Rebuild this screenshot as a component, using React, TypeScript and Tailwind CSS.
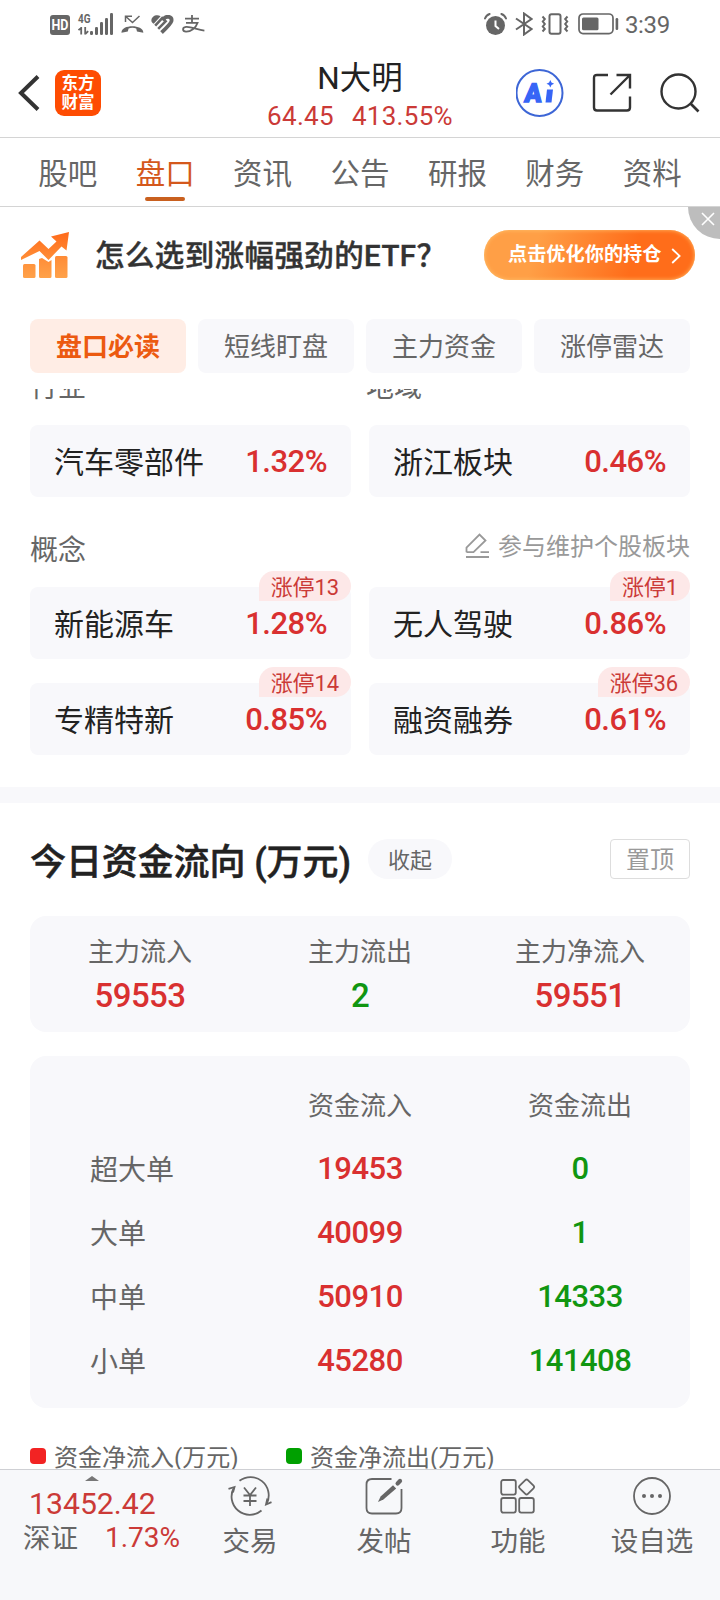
import React, { useState } from 'react';

type Sector = { name: string; change: string; limitUp?: string };

const TABS = ['股吧', '盘口', '资讯', '公告', '研报', '财务', '资料'];
const CHIPS = ['盘口必读', '短线盯盘', '主力资金', '涨停雷达'];

const INDUSTRY: Sector[] = [
  { name: '汽车零部件', change: '1.32%' },
  { name: '浙江板块', change: '0.46%' },
];

const CONCEPTS: Sector[] = [
  { name: '新能源车', change: '1.28%', limitUp: '涨停13' },
  { name: '无人驾驶', change: '0.86%', limitUp: '涨停1' },
  { name: '专精特新', change: '0.85%', limitUp: '涨停14' },
  { name: '融资融券', change: '0.61%', limitUp: '涨停36' },
];

const SUMMARY = [
  { label: '主力流入', value: '59553', up: true },
  { label: '主力流出', value: '2', up: false },
  { label: '主力净流入', value: '59551', up: true },
];

const ORDERS = [
  { label: '超大单', inflow: '19453', outflow: '0' },
  { label: '大单', inflow: '40099', outflow: '1' },
  { label: '中单', inflow: '50910', outflow: '14333' },
  { label: '小单', inflow: '45280', outflow: '141408' },
];

const StatusBar: React.FC = () => (
  <div className="flex h-12 shrink-0 items-center justify-between pl-[50px] pr-[50px] text-[#666]">
    <div className="flex items-center">
      <svg width="20" height="20" viewBox="0 0 20 20" className="mt-0.5">
        <rect width="20" height="20" rx="3" fill="#666" />
        <text x="10" y="15" textAnchor="middle" fontSize="14" fontWeight="700" fill="#fff" textLength="17" lengthAdjust="spacingAndGlyphs">HD</text>
      </svg>
      <svg width="36" height="22" viewBox="0 0 36 22" className="ml-2 overflow-visible" fill="#666">
        <text x="0" y="9.8" fontSize="13" fontWeight="700" textLength="12.5" lengthAdjust="spacingAndGlyphs">4G</text>
        <path d="M3.2 14V21.5M0.5 17.2L3.2 14.8M7.2 14V21.5M10.2 18.2L7.2 21" stroke="#666" strokeWidth="1.8" fill="none" />
        <rect x="12" y="18" width="3" height="4" rx="1.2" />
        <rect x="17" y="14" width="3" height="8" rx="1.2" />
        <rect x="22" y="9" width="3" height="13" rx="1.2" />
        <rect x="27" y="5" width="3" height="17" rx="1.2" />
        <rect x="32" y="0" width="3" height="22" rx="1.2" />
      </svg>
      <svg width="23" height="19" viewBox="0 0 23 19" className="ml-[7px]" fill="none" stroke="#666">
        <path d="M4.5 7V1.2H11M4.8 1.5L11.5 7.5L18.5 1" strokeWidth="1.5" />
        <path d="M0.5 17.8C-0.2 9 22.8 9 22.3 17.8L16 16.5L15.2 13.4C13 12.4 9.8 12.4 7.6 13.4L6.8 16.5Z" fill="#666" stroke="none" />
      </svg>
      <svg width="23" height="19" viewBox="0 0 23 19" className="ml-[7px]" fill="none" stroke="#666">
        <path d="M0.4 6C0 1.2 5.6 -1.2 9.6 1.2L2.8 8.8C1.4 8 0.6 7.2 0.4 6Z" fill="#666" stroke="none" />
        <path d="M4.2 10.6L11.2 3.2L14.6 6.4L7.2 13.8" strokeWidth="2.6" />
        <path d="M12.6 4C15.4 0.2 21.6 1.4 20.4 6.4C19.8 8.8 15.4 13 10.6 17.6" strokeWidth="3.8" />
      </svg>
      <svg width="23" height="18" viewBox="0 0 23 18" className="ml-2" fill="none" stroke="#666" strokeWidth="1.8">
        <path d="M3 3.6H17M10 0V7.6M4 7.8H15.6C14 13 8.5 16.8 4 16.6C0.2 16.4 0 12.4 4 11.9C9 11.4 15 14.6 22.4 15.6" />
      </svg>
    </div>
    <div className="flex items-center">
      <svg width="23" height="22" viewBox="0 0 23 22">
        <circle cx="11.5" cy="12.5" r="9.5" fill="#666" />
        <path d="M1 5.5C1.8 3.2 3.4 1.8 5.6 1M22 5.5C21.2 3.2 19.6 1.8 17.4 1" stroke="#666" strokeWidth="2" fill="none" strokeLinecap="round" />
        <path d="M11.5 7.5V13L15 16" stroke="#fff" strokeWidth="2" fill="none" />
      </svg>
      <svg width="18" height="24" viewBox="0 0 18 24" className="ml-2" fill="none" stroke="#666" strokeWidth="2">
        <path d="M1 6.5L16.5 17L9 22.5V1.5L16.5 7L1 17.5" />
      </svg>
      <svg width="28" height="22" viewBox="0 0 28 22" className="ml-2" fill="none" stroke="#666" strokeWidth="2">
        <rect x="8.5" y="1.2" width="11" height="19.6" rx="2" />
        <path d="M1.5 3.5L3.8 6L1.8 8.5L3.8 11L1.8 13.5L3.8 16L1.5 18.5M26.5 3.5L24.2 6L26.2 8.5L24.2 11L26.2 13.5L24.2 16L26.5 18.5" strokeWidth="2" />
      </svg>
      <svg width="41" height="22" viewBox="0 0 41 22" className="ml-[9px]">
        <rect x="1" y="1" width="34" height="19.6" rx="4" fill="none" stroke="#666" strokeWidth="1.7" />
        <rect x="4" y="4.4" width="16.5" height="12.8" rx="1.5" fill="#666" />
        <rect x="37.6" y="5" width="2.6" height="12" rx="1.2" fill="#666" />
      </svg>
      <span className="ml-1.5 pt-0.5 text-2xl leading-8 tracking-[-0.3px]">3:39</span>
    </div>
  </div>
);

const Header: React.FC = () => (
  <header className="flex h-[90px] shrink-0 border-b border-[#d4d4d4] text-[#222]">
    <div className="flex w-[220px] items-center pl-[18px]">
      <svg width="22" height="36" viewBox="0 0 22 36" fill="none" stroke="#333" strokeWidth="4">
        <path d="M20 1.5L3 18L20 34.5" />
      </svg>
      <div className="ml-[15px] flex h-[46px] w-[46px] flex-col items-center justify-center rounded-[9px] bg-[#fe4c02] text-[16.5px] font-bold leading-[19px] text-white">
        <span>东方</span>
        <span>财富</span>
      </div>
    </div>
    <div className="flex flex-1 flex-col items-center pt-2.5">
      <h1 className="text-[31.5px] leading-[42px]">N大明</h1>
      <div className="flex gap-[18px] text-[26px] leading-8 tracking-[0.3px] text-[#cb3a37]">
        <span>64.45</span>
        <span>413.55%</span>
      </div>
    </div>
    <div className="flex w-[220px] items-center justify-end gap-7 pr-5">
      <svg width="48" height="48" viewBox="0 0 48 48">
        <circle cx="23.5" cy="24" r="23" fill="none" stroke="#3d66d6" strokeWidth="2" />
        <text x="9" y="33" fontSize="26" fontWeight="900" fill="#3765f6" stroke="#3765f6" strokeWidth="1.4" transform="skewX(-5) translate(2 0)" textLength="17" lengthAdjust="spacingAndGlyphs">A</text>
        <path d="M31 20.5H37L35.5 33.5H29.5Z" fill="#3765f6" />
        <path d="M34.3 11L35.5 13.6L38.1 14.8L35.5 16L34.3 18.6L33.1 16L30.5 14.8L33.1 13.6Z" fill="#3765f6" />
      </svg>
      <svg width="40" height="40" viewBox="0 0 40 40" fill="none" stroke="#333" strokeWidth="2.4">
        <path d="M16 2H5Q2 2 2 5V34.5Q2 37.5 5 37.5H35Q38 37.5 38 34.5V23.5" />
        <path d="M24.5 2H38V15.5M37.5 2.5L18.5 21.5" />
      </svg>
      <svg width="40" height="40" viewBox="0 0 40 40" fill="none" stroke="#333" strokeWidth="2.4">
        <circle cx="18.5" cy="18.5" r="17" />
        <path d="M30.5 30.5L38.5 38.5" strokeWidth="2.6" />
      </svg>
    </div>
  </header>
);

const Banner: React.FC = () => (
  <div className="relative flex h-[112px] shrink-0 items-start pl-[21px]">
    <svg width="49" height="47" viewBox="0 0 49 47" className="mt-6">
      <defs>
        <linearGradient id="rise" x1="0" y1="0" x2="0" y2="1">
          <stop offset="0" stopColor="#ff6a1a" />
          <stop offset="1" stopColor="#ff8f38" />
        </linearGradient>
        <linearGradient id="bars" gradientUnits="userSpaceOnUse" x1="0" y1="24" x2="0" y2="47">
          <stop offset="0" stopColor="#ff8a35" />
          <stop offset="1" stopColor="#ffa24a" />
        </linearGradient>
      </defs>
      <path d="M48 1L45.5 19.5L40.5 15.5L27.5 29L18.5 20L0 29V26L18.5 9.5L27.5 18L35.5 10.5L30 5.5Z" fill="url(#rise)" />
      <g fill="url(#bars)">
        <rect x="2" y="33" width="12.5" height="14" rx="1.5" />
        <path d="M18 28L21 27L27.5 31L30.5 29V45.5Q30.5 47 29 47H19.5Q18 47 18 45.5Z" />
        <rect x="34" y="25" width="12.5" height="22" rx="1.5" />
      </g>
    </svg>
    <div className="ml-[25px] mt-[26px] text-[29.5px] font-medium leading-[46px] tracking-[0.4px] text-[#333] [-webkit-text-stroke:0.4px_#333]">怎么选到涨幅强劲的ETF？</div>
    <button className="absolute left-[484px] top-[23px] flex h-[50px] w-[211px] items-center rounded-full bg-linear-[105deg,#ff9f46_25%,#ff6d1a_70%] pl-6 pt-px text-[19.2px] font-bold text-white shadow-[inset_0_0_4px_0px_#ffc36e]">
      点击优化你的持仓
      <svg width="10" height="16" viewBox="0 0 10 16" className="ml-[9px]" fill="none" stroke="#fff" strokeWidth="1.8">
        <path d="M1.2 1L8.6 8L1.2 15" />
      </svg>
    </button>
    <div className="absolute right-0 top-0 h-8 w-8 rounded-bl-full bg-[#bdbdbd]">
      <svg width="14" height="14" viewBox="0 0 14 14" className="ml-[13px] mt-[5px]" stroke="#fff" strokeWidth="1.6">
        <path d="M1 1L13 13M13 1L1 13" />
      </svg>
    </div>
  </div>
);

const SectorCard: React.FC<{ item: Sector }> = ({ item }) => (
  <div className="relative flex h-[72px] items-center justify-between rounded-lg bg-[#f8f8fb] px-6 pt-0.5">
    <span className="text-[30px] text-[#222]">{item.name}</span>
    <span className="text-[31px] font-medium tracking-[-0.5px] text-[#d93030]">{item.change}</span>
    {item.limitUp && (
      <span className="absolute -top-4 right-0 flex h-[30px] items-center rounded-t-[15px] rounded-br-[15px] bg-[#fde8e8] px-3 pt-0.5 text-[22px] tracking-[-0.1px] text-[#cb3a37]">
        {item.limitUp}
      </span>
    )}
  </div>
);

const FundFlow: React.FC = () => (
  <section className="px-[30px]">
    <div className="flex items-center pb-[37px] pt-9">
      <h2 className="pt-[9px] text-4xl font-medium leading-[31px] tracking-[-0.1px] text-[#222] [-webkit-text-stroke:0.5px_#222]">今日资金流向 (万元)</h2>
      <button className="ml-[17px] h-10 w-[84px] rounded-full bg-[#f8f8fb] pt-1 text-[22px] leading-9 text-[#666]">收起</button>
      <button className="ml-auto h-10 w-20 rounded border border-[#ddd] pt-0.5 text-2xl leading-9 text-[#999]">置顶</button>
    </div>

    <div className="grid h-[116px] grid-cols-3 rounded-2xl bg-[#f8f8fb] pt-4 text-center">
      {SUMMARY.map((s) => (
        <div key={s.label}>
          <div className="text-[26px] leading-10 text-[#666]">{s.label}</div>
          <div className={`text-[33px] font-medium leading-[48px] tracking-[-0.6px] ${s.up ? 'text-[#d93030]' : 'text-[#119611]'}`}>{s.value}</div>
        </div>
      ))}
    </div>

    <div className="mt-6 h-[352px] rounded-2xl bg-[#f8f8fb] pt-[17px]">
      <div className="grid h-16 grid-cols-3 items-center pt-0.5 text-center text-[26px] text-[#666]">
        <span />
        <span>资金流入</span>
        <span>资金流出</span>
      </div>
      {ORDERS.map((o) => (
        <div key={o.label} className="grid h-16 grid-cols-3 items-center text-center text-[31px] font-medium tracking-[-0.5px]">
          <span className="pl-[60px] pt-[3px] text-left text-[28px] font-normal tracking-normal text-[#666]">{o.label}</span>
          <span className="text-[#d93030]">{o.inflow}</span>
          <span className="text-[#119611]">{o.outflow}</span>
        </div>
      ))}
    </div>

    <div className="mt-8 flex h-8 items-center text-2xl text-[#666]">
      <div className="flex w-64 items-center gap-2">
        <i className="h-4 w-4 rounded bg-[#f22323]" />
        <span className="pt-[3px]">资金净流入(万元)</span>
      </div>
      <div className="flex items-center gap-2">
        <i className="h-4 w-4 rounded bg-[#00a000]" />
        <span className="pt-[3px]">资金净流出(万元)</span>
      </div>
    </div>
  </section>
);

const BottomItem: React.FC<{ label: string; children: React.ReactNode }> = ({ label, children }) => (
  <button className="flex w-[134px] flex-col items-center pt-1.5 text-[27.5px] leading-10 text-[#666]">
    <svg width="44" height="40" viewBox="0 0 44 40" fill="none" stroke="#666" strokeWidth="1.8">
      {children}
    </svg>
    <span className="mt-1.5">{label}</span>
  </button>
);

const BottomBar: React.FC = () => (
  <footer className="flex h-[131px] shrink-0 border-t border-[#cfd0d4] bg-[#f7f8fa]">
    <div className="w-[183px] pt-1.5">
      <svg width="14" height="5" viewBox="0 0 14 5" className="ml-[85px]">
        <path d="M7 0L14 5H0Z" fill="#777" />
      </svg>
      <div className="pl-[29px] pt-px text-[30.2px] leading-[44px] text-[#cb3a37]">13452.42</div>
      <div className="-mt-[7px] flex items-center pl-[23px] text-[28px] leading-9 text-[#cb3a37]">
        <span className="pt-0.5 text-[27.5px] text-[#666]">深证</span>
        <span className="ml-[27px]">1.73%</span>
      </div>
    </div>
    <BottomItem label="交易">
      <path d="M11.5 4.8A18.2 18.2 0 0 1 39 27M33.5 34.5A18.2 18.2 0 0 1 6 11.5" />
      <path d="M0.5 12.8L6.5 11L5 16.5M43.5 26.2L38 28.5L39.4 22.5" />
      <path d="M16 11.5L22 19L28 11.5M22 19V30M15.5 19.5H28.5M15.5 25H28.5" />
    </BottomItem>
    <BottomItem label="发帖">
      <path d="M29.5 3H10Q4.5 3 4.5 8.5V32Q4.5 37.5 10 37.5H34Q39.5 37.5 39.5 32V13" />
      <path d="M16 26L18.6 20.4L31 9.2L34.2 12.4L21.4 23.4Z" fill="#666" stroke="none" />
      <path d="M35.6 7.4L38 5" strokeWidth="4.2" strokeLinecap="round" />
    </BottomItem>
    <BottomItem label="功能">
      <rect x="5.2" y="4" width="14.6" height="14.6" rx="2" />
      <rect x="5.2" y="22" width="14.6" height="14.6" rx="2" />
      <rect x="23.2" y="22" width="14.6" height="14.6" rx="2" />
      <rect x="24.8" y="5.2" width="11.6" height="11.6" rx="1.8" transform="rotate(45 30.6 11)" />
    </BottomItem>
    <BottomItem label="设自选">
      <circle cx="22" cy="20" r="18" />
      <g fill="#666" stroke="none">
        <circle cx="14" cy="20" r="2" />
        <circle cx="22" cy="20" r="2" />
        <circle cx="30" cy="20" r="2" />
      </g>
    </BottomItem>
  </footer>
);

const App: React.FC = () => {
  const [activeTab, setActiveTab] = useState('盘口');
  const [activeChip, setActiveChip] = useState('盘口必读');

  return (
    <div className="flex h-[1600px] w-[720px] flex-col overflow-hidden bg-white font-['Roboto','Noto_Sans_CJK_SC',sans-serif]">
      <StatusBar />
      <Header />

      <nav className="flex h-[69px] shrink-0 border-b border-[#d4d4d4] px-[19px]">
        {TABS.map((tab) => (
          <button
            key={tab}
            onClick={() => setActiveTab(tab)}
            className={`flex flex-1 flex-col items-center pt-3.5 text-[29.5px] leading-[45px] ${activeTab === tab ? 'text-[#d4581c]' : 'text-[#666]'}`}
          >
            {tab}
            {activeTab === tab && <i className="h-1 w-10 rounded-full bg-[#c9601f]" />}
          </button>
        ))}
      </nav>

      <Banner />

      <div className="flex shrink-0 gap-3 px-[30px] pb-4">
        {CHIPS.map((chip) => (
          <button
            key={chip}
            onClick={() => setActiveChip(chip)}
            className={`h-[54px] flex-1 rounded-lg pt-[3px] text-[26px] leading-[51px] ${activeChip === chip ? 'bg-[#ffede5] font-bold text-[#ec5a10]' : 'bg-[#f8f8fb] text-[#666]'}`}
          >
            {chip}
          </button>
        ))}
      </div>

      <main className="min-h-0 flex-1 overflow-hidden">
        {/* scrolled list, the first row is partly under the chips */}
        <section className="-mt-[19px] px-[30px]">
          <div className="flex h-9 items-center text-[28px] text-[#666]">
            <span className="w-[336px]">行业</span>
            <span>地域</span>
          </div>
          <div className="mt-[19px] grid grid-cols-2 gap-x-[18px]">
            {INDUSTRY.map((s) => <SectorCard key={s.name} item={s} />)}
          </div>
          <div className="flex h-[90px] items-center justify-between pt-3">
            <span className="pt-[5px] text-[28px] text-[#666]">概念</span>
            <span className="flex items-center pb-0.5 text-2xl text-[#999]">
              <svg width="25" height="25" viewBox="0 0 25 25" className="mb-1 mr-2" fill="none" stroke="#999" strokeWidth="1.8">
                <path d="M1.5 19.2V14.5L14.5 1.5L20.5 7.5L8.5 19.2H1.5M15.5 19.2H24M1 24H24" />
              </svg>
              参与维护个股板块
            </span>
          </div>
          <div className="grid grid-cols-2 gap-x-[18px] gap-y-6">
            {CONCEPTS.map((s) => <SectorCard key={s.name} item={s} />)}
          </div>
        </section>
        <div className="mt-8 h-4 bg-[#f8f8fb]" />
        <FundFlow />
      </main>

      <BottomBar />
    </div>
  );
};

export default App;
